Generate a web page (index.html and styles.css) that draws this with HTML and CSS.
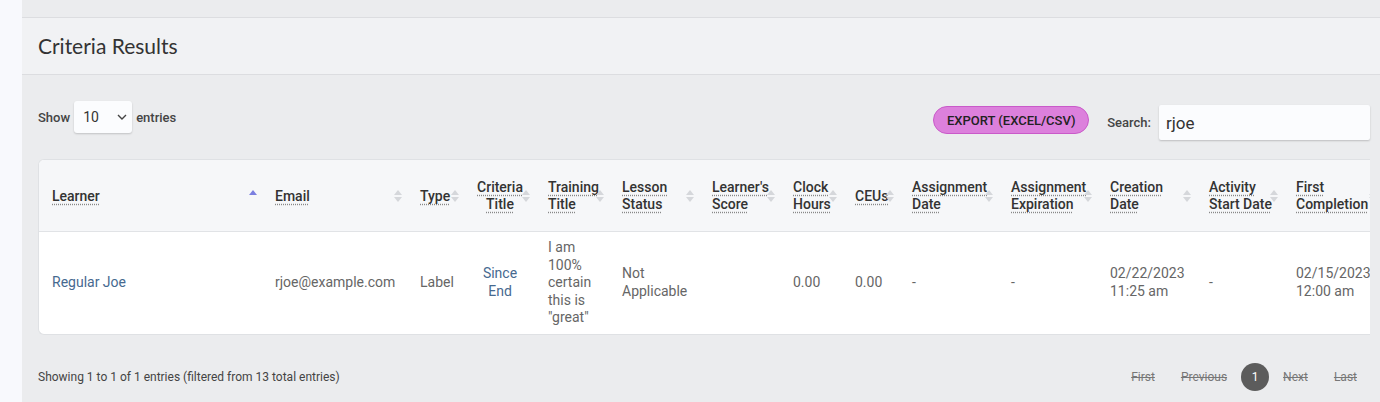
FILE: index.html
```html
<!DOCTYPE html>
<html lang="en">
<head>
    <meta charset="UTF-8">
    <meta name="viewport" content="width=device-width, initial-scale=1.0">
    <title>Criteria Results</title>
    <link rel="stylesheet" href="styles.css">
</head>
<body>
    <div class="page">
        <div class="side-rail"></div>
        <div class="content">
            <div class="topbar"></div>
            <section class="panel">
                <div class="panel-heading">
                    <h2>Criteria Results</h2>
                </div>
                <div class="panel-body">
                    <!-- controles da tabela -->
                    <div class="dt-top">
                        <div class="dt-length">
                            Show
                            <div class="length-select">
                                <span>10</span>
                                <svg width="10" height="6" viewBox="0 0 10 6"><path d="M1 1l4 4 4-4" fill="none" stroke="#444" stroke-width="1.4"/></svg>
                            </div>
                            entries
                        </div>
                        <div class="dt-tools">
                            <button class="btn-export">EXPORT (EXCEL/CSV)</button>
                            <label class="dt-search">Search: <input type="text" value="rjoe"></label>
                        </div>
                    </div>

                    <div class="table-wrap">
                        <table class="results">
                            <colgroup>
                                <col class="c-learner">
                                <col class="c-email">
                                <col class="c-type">
                                <col class="c-criteria">
                                <col class="c-training">
                                <col class="c-lesson">
                                <col class="c-score">
                                <col class="c-hours">
                                <col class="c-ceus">
                                <col class="c-date">
                                <col class="c-date">
                                <col class="c-date">
                                <col class="c-start">
                                <col class="c-date">
                            </colgroup>
                            <thead>
                                <tr>
                                    <th class="sorted-asc"><span class="hint">Learner</span></th>
                                    <th><span class="hint">Email</span></th>
                                    <th><span class="hint">Type</span></th>
                                    <th class="center"><span class="hint">Criteria</span><br><span class="hint">Title</span></th>
                                    <th><span class="hint">Training</span><br><span class="hint">Title</span></th>
                                    <th><span class="hint">Lesson</span><br><span class="hint">Status</span></th>
                                    <th><span class="hint">Learner's</span><br><span class="hint">Score</span></th>
                                    <th><span class="hint">Clock</span><br><span class="hint">Hours</span></th>
                                    <th><span class="hint">CEUs</span></th>
                                    <th><span class="hint">Assignment</span><br><span class="hint">Date</span></th>
                                    <th><span class="hint">Assignment</span><br><span class="hint">Expiration</span></th>
                                    <th><span class="hint">Creation</span><br><span class="hint">Date</span></th>
                                    <th><span class="hint">Activity</span><br><span class="hint">Start Date</span></th>
                                    <th><span class="hint">First</span><br><span class="hint">Completion</span></th>
                                </tr>
                            </thead>
                            <tbody>
                                <tr>
                                    <td><a href="#">Regular Joe</a></td>
                                    <td>rjoe@example.com</td>
                                    <td>Label</td>
                                    <td class="center"><a href="#">Since End</a></td>
                                    <td>I am 100% certain this is "great"</td>
                                    <td>Not Applicable</td>
                                    <td></td>
                                    <td>0.00</td>
                                    <td>0.00</td>
                                    <td>-</td>
                                    <td>-</td>
                                    <td>02/22/2023 11:25 am</td>
                                    <td>-</td>
                                    <td>02/15/2023 12:00 am</td>
                                </tr>
                            </tbody>
                        </table>
                    </div>

                    <div class="dt-bottom">
                        <div class="dt-info">Showing 1 to 1 of 1 entries (filtered from 13 total entries)</div>
                        <div class="pager">
                            <span class="page-btn disabled">First</span>
                            <span class="page-btn disabled">Previous</span>
                            <span class="page-btn current">1</span>
                            <span class="page-btn disabled">Next</span>
                            <span class="page-btn disabled">Last</span>
                        </div>
                    </div>
                </div>
            </section>
        </div>
    </div>
</body>
</html>
```

FILE: styles.css
```css
* {
    box-sizing: border-box;
}

body {
    margin: 0;
    font-family: Roboto, "Liberation Sans", sans-serif;
    color: #333;
    background: #f8f9fd;
}

.page {
    display: flex;
    height: 402px;
    overflow: hidden;
}

.side-rail {
    width: 22px;
    flex-shrink: 0;
}

.content {
    flex: 1;
    background: #ebecee;
    min-width: 0;
}

.topbar {
    height: 18px;
    border-bottom: 1px solid #dcdde0;
}

.panel-heading {
    height: 57px;
    display: flex;
    align-items: center;
    padding-left: 16px;
    padding-bottom: 1px;
    background: #f1f2f4;
    border-bottom: 1px solid #dcdde0;
}

.panel-heading h2 {
    margin: 0;
    font-family: Lato, "Open Sans", sans-serif;
    font-weight: 400;
    font-size: 21px;
    color: #333;
}

.panel-body {
    padding: 0 10px 0 16px;
}

/* linha de cima: mostrar / exportar / buscar */
.dt-top {
    display: flex;
    justify-content: space-between;
    align-items: flex-start;
    padding-top: 26px;
}

.dt-length {
    display: flex;
    align-items: center;
    gap: 4px;
    font-size: 13px;
    font-weight: 500;
    color: #444;
}

.length-select {
    width: 58px;
    height: 32px;
    display: flex;
    align-items: center;
    justify-content: space-between;
    padding: 0 5px 0 9px;
    background: #fbfcfe;
    border-radius: 3px;
    box-shadow: 0 1px 2px rgba(0, 0, 0, 0.18);
    font-size: 14px;
    font-weight: 400;
    color: #333;
}

.dt-tools {
    display: flex;
    align-items: flex-start;
    margin-top: 4px;
}

.btn-export {
    margin-top: 1px;
    width: 156px;
    height: 28px;
    padding: 0;
    background: #dc80dc;
    border: 1px solid #c95ac9;
    border-radius: 14px;
    font-family: Roboto, sans-serif;
    font-size: 13px;
    font-weight: 500;
    color: #222;
    cursor: pointer;
}

.dt-search {
    display: flex;
    align-items: center;
    gap: 8px;
    margin-left: 18px;
    font-size: 13px;
    font-weight: 500;
    color: #444;
}

.dt-search input {
    width: 211px;
    height: 35px;
    padding: 0 7px;
    border: none;
    border-radius: 2px;
    background: #fbfcfe;
    box-shadow: 0 1px 2px rgba(0, 0, 0, 0.2);
    font-family: Roboto, sans-serif;
    font-size: 17px;
    color: #333;
}

/* tabela */
.table-wrap {
    margin-top: 19px;
    overflow: hidden;
    background: #fff;
    border: 1px solid #dfe1e4;
    border-right: none;
    border-radius: 6px 0 0 6px;
}

.results {
    table-layout: fixed;
    width: 1343px;
    border-collapse: collapse;
    font-size: 14px;
}

.c-learner { width: 223px; }
.c-email { width: 145px; }
.c-type { width: 57px; }
.c-criteria { width: 71px; }
.c-training { width: 74px; }
.c-lesson { width: 90px; }
.c-score { width: 81px; }
.c-hours { width: 62px; }
.c-ceus { width: 57px; }
.c-date { width: 99px; }
.c-start { width: 87px; }

.results th {
    position: relative;
    padding: 19px 12px 18px 13px;
    background: #f6f7f9;
    border-bottom: 1px solid #e1e3e6;
    text-align: left;
    font-weight: 500;
    line-height: 17px;
    color: #333;
    white-space: nowrap;
}

.results th .hint {
    text-decoration: underline dotted #888;
    text-underline-offset: 3px;
}

/* setas de ordenação */
.results th::before,
.results th::after {
    content: "";
    position: absolute;
    right: 5px;
    width: 0;
    height: 0;
    border-left: 4px solid transparent;
    border-right: 4px solid transparent;
}

.results th::before {
    top: calc(50% - 6px);
    border-bottom: 5px solid #d5d7db;
}

.results th::after {
    top: calc(50% + 1px);
    border-top: 5px solid #d5d7db;
}

.results th.sorted-asc::before {
    border-bottom-color: #7b7fe0;
}

.results th.sorted-asc::after {
    display: none;
}

.results td {
    padding: 7px 6px 7px 13px;
    line-height: 17.5px;
    color: #666;
    vertical-align: middle;
}

.results .center {
    text-align: center;
    padding-right: 12px;
}

.results a {
    color: #46698f;
    text-decoration: none;
}

/* rodapé */
.dt-bottom {
    display: flex;
    justify-content: space-between;
    align-items: center;
    margin-top: 28px;
}

.dt-info {
    font-size: 12px;
    color: #444;
}

.pager {
    display: flex;
    align-items: center;
}

.page-btn {
    padding: 0 13px;
    font-size: 12px;
    color: #777;
}

.page-btn.disabled {
    text-decoration: line-through;
}

.page-btn.current {
    width: 28px;
    height: 28px;
    margin: 0 1px;
    padding: 0;
    border-radius: 50%;
    background: #5c5c5c;
    color: #fff;
    display: flex;
    align-items: center;
    justify-content: center;
}
```
